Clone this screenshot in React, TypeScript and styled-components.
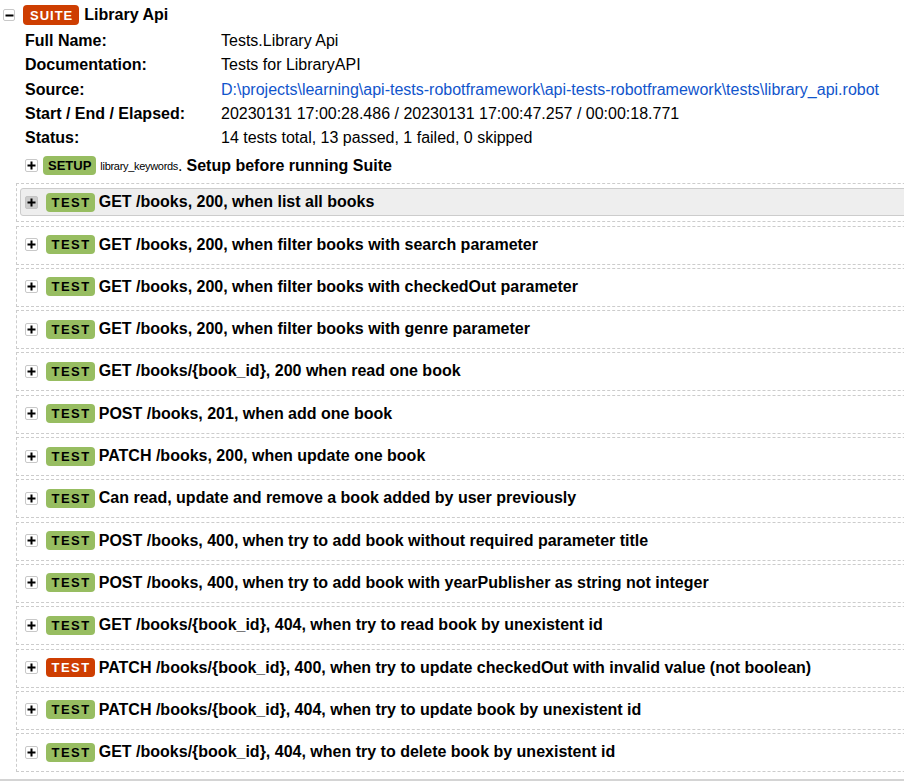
import React from 'react';
import styled, { createGlobalStyle } from 'styled-components';

type Status = 'pass' | 'fail';

const tests: { name: string; status: Status }[] = [
  { name: 'GET /books, 200, when list all books', status: 'pass' },
  { name: 'GET /books, 200, when filter books with search parameter', status: 'pass' },
  { name: 'GET /books, 200, when filter books with checkedOut parameter', status: 'pass' },
  { name: 'GET /books, 200, when filter books with genre parameter', status: 'pass' },
  { name: 'GET /books/{book_id}, 200 when read one book', status: 'pass' },
  { name: 'POST /books, 201, when add one book', status: 'pass' },
  { name: 'PATCH /books, 200, when update one book', status: 'pass' },
  { name: 'Can read, update and remove a book added by user previously', status: 'pass' },
  { name: 'POST /books, 400, when try to add book without required parameter title', status: 'pass' },
  { name: 'POST /books, 400, when try to add book with yearPublisher as string not integer', status: 'pass' },
  { name: 'GET /books/{book_id}, 404, when try to read book by unexistent id', status: 'pass' },
  { name: 'PATCH /books/{book_id}, 400, when try to update checkedOut with invalid value (not boolean)', status: 'fail' },
  { name: 'PATCH /books/{book_id}, 404, when try to update book by unexistent id', status: 'pass' },
  { name: 'GET /books/{book_id}, 404, when try to delete book by unexistent id', status: 'pass' },
];

const meta: { label: string; value: string; link?: boolean }[] = [
  { label: 'Full Name:', value: 'Tests.Library Api' },
  { label: 'Documentation:', value: 'Tests for LibraryAPI' },
  {
    label: 'Source:',
    value: 'D:\\projects\\learning\\api-tests-robotframework\\api-tests-robotframework\\tests\\library_api.robot',
    link: true,
  },
  { label: 'Start / End / Elapsed:', value: '20230131 17:00:28.486 / 20230131 17:00:47.257 / 00:00:18.771' },
  { label: 'Status:', value: '14 tests total, 13 passed, 1 failed, 0 skipped' },
];

const GlobalStyle = createGlobalStyle`
  html, body { margin: 0; padding: 0; background: #fff; }
  body {
    overflow: hidden;
    font-family: "Liberation Sans", Arial, Helvetica, sans-serif;
    font-size: 16px;
    color: #000;
  }
`;

const Page = styled.div`
  width: 904px;
  height: 781px;
  overflow: hidden;
  box-sizing: border-box;
  padding: 5px 0 0 3px;
  display: flex;
  flex-direction: column;
`;

const SuiteHeader = styled.div`
  display: flex;
  align-items: center;
  height: 20px;
`;

const ToggleBox = styled.span<{ $active?: boolean; $size: number }>`
  flex: none;
  box-sizing: border-box;
  width: ${(p) => p.$size}px;
  height: ${(p) => p.$size}px;
  border: 1px solid ${(p) => (p.$active ? '#c4c4c4' : '#c8c8c8')};
  background: ${(p) => (p.$active ? '#cccccc' : '#ffffff')};
  border-radius: 2px;
  display: flex;
  align-items: center;
  justify-content: center;
`;

const Label = styled.span<{ $status: Status; $spacing: number; $h: number; $pad: number; $gap: number }>`
  flex: none;
  box-sizing: border-box;
  display: inline-flex;
  align-items: center;
  justify-content: center;
  height: ${(p) => p.$h}px;
  margin-left: ${(p) => p.$gap}px;
  padding: 0 ${(p) => p.$pad}px 0 ${(p) => p.$pad + p.$spacing}px;
  border-radius: 4px;
  font-size: 13px;
  font-weight: bold;
  letter-spacing: ${(p) => p.$spacing}px;
  background: ${(p) => (p.$status === 'pass' ? '#97bd61' : '#ce3e01')};
  color: ${(p) => (p.$status === 'pass' ? '#000' : '#fff')};
`;

const Name = styled.span<{ $gap: number }>`
  margin-left: ${(p) => p.$gap}px;
  font-weight: bold;
  white-space: nowrap;
`;

const MetaGrid = styled.div`
  display: grid;
  grid-template-columns: 196px auto;
  grid-auto-rows: 24.25px;
  align-items: center;
  margin: 4px 0 0 22px;
  white-space: nowrap;
`;

const MetaLabel = styled.div`
  font-weight: bold;
`;

const MetaValue = styled.div<{ $link?: boolean }>`
  color: ${(p) => (p.$link ? '#1155cc' : '#000')};
`;

const SetupRow = styled.div`
  display: flex;
  align-items: center;
  height: 19px;
  margin: 6px 0 0 22px;
  white-space: nowrap;
`;

const ParentName = styled.span`
  margin-left: 4px;
  font-size: 11px;
  letter-spacing: -0.3px;
`;

const Children = styled.div`
  margin: 8px 0 0 13px;
  width: 1000px;
  display: flex;
  flex-direction: column;
  gap: 3.3px;
`;

const TestBox = styled.div`
  box-sizing: border-box;
  border: 1px dashed #cccccc;
  padding: 4px 0 5px 3px;
`;

const TestHeader = styled.div<{ $hover?: boolean }>`
  box-sizing: border-box;
  height: 28px;
  display: flex;
  align-items: center;
  padding-left: 4px;
  border: 1px solid ${(p) => (p.$hover ? '#cccccc' : '#ffffff')};
  border-radius: 3px;
  background: ${(p) => (p.$hover ? '#eeeeee' : '#ffffff')};
`;

const BottomRule = styled.div`
  margin-top: 7px;
  height: 0;
  border-top: 2px solid #d4d4d4;
  margin-left: -3px;
`;

const Toggle: React.FC<{ open?: boolean; active?: boolean; size?: number }> = ({ open, active, size = 13 }) => (
  <ToggleBox $active={active} $size={size}>
    <svg width="9" height="9" viewBox="0 0 9 9">
      <rect x="0.5" y="3.5" width="8" height="2" fill="#000" />
      {!open && <rect x="3.5" y="0.5" width="2" height="8" fill="#000" />}
    </svg>
  </ToggleBox>
);

export default function App() {
  return (
    <>
      <GlobalStyle />
      <Page>
        <SuiteHeader>
          <Toggle open size={12} />
          <Label $status="fail" $spacing={1} $h={20} $pad={6} $gap={8}>
            SUITE
          </Label>
          <Name $gap={5}>Library Api</Name>
        </SuiteHeader>
        <MetaGrid>
          {meta.map((m) => (
            <React.Fragment key={m.label}>
              <MetaLabel>{m.label}</MetaLabel>
              <MetaValue $link={m.link}>{m.value}</MetaValue>
            </React.Fragment>
          ))}
        </MetaGrid>
        <SetupRow>
          <Toggle />
          <Label $status="pass" $spacing={0} $h={19} $pad={5} $gap={5}>
            SETUP
          </Label>
          <ParentName>library_keywords</ParentName>
          <span>.</span>
          <Name $gap={4}>Setup before running Suite</Name>
        </SetupRow>
        <Children>
          {tests.map((t, i) => (
            <TestBox key={t.name}>
              <TestHeader $hover={i === 0}>
                <Toggle active={i === 0} />
                <Label $status={t.status} $spacing={1.5} $h={19} $pad={4} $gap={8}>
                  TEST
                </Label>
                <Name $gap={4}>{t.name}</Name>
              </TestHeader>
            </TestBox>
          ))}
        </Children>
        <BottomRule />
      </Page>
    </>
  );
}
